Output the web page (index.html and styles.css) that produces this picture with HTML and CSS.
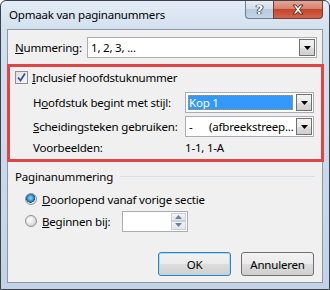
FILE: index.html
```html
<!DOCTYPE html>
<html>
<head>
<meta charset="utf-8">
<link rel="stylesheet" href="styles.css">
</head>
<body>
<div class="window">
  <div class="titlebar">
    <span class="title">Opmaak van paginanummers</span>
    <div class="caption-btns">
      <span class="cbtn help">?</span>
      <span class="cbtn close"><svg width="18" height="11" viewBox="0 0 18 11"><path d="M4 1 L7 1 L9 3.5 L11 1 L14 1 L10.5 5.5 L14 10 L11 10 L9 7.5 L7 10 L4 10 L7.5 5.5 Z" fill="#fff" stroke="#5a2a22" stroke-width="1"/></svg></span>
    </div>
  </div>
  <div class="client">
    <div class="num-row">
      <span class="lbl"><u>N</u>ummering:</span>
      <div class="combo num-combo"><span class="combo-text">1, 2, 3, ...</span><span class="arrow"><svg width="7" height="4" viewBox="0 0 7 4"><path d="M0 0H7L3.5 4Z" fill="#000"/></svg></span></div>
    </div>
    <div class="chapter">
      <div class="check-row">
        <span class="checkbox"><svg width="11" height="11" viewBox="0 0 11 11"><path d="M2 5.5 L4.5 8.5 L9 1.5" fill="none" stroke="#3b4f9a" stroke-width="1.8"/></svg></span>
        <span><u>I</u>nclusief hoofdstuknummer</span>
      </div>
      <div class="chapter-grid">
        <span class="lbl">H<u>o</u>ofdstuk begint met stijl:</span>
        <div class="combo sel-combo"><span class="combo-text"><span class="sel">Kop 1</span></span><span class="arrow"><svg width="7" height="4" viewBox="0 0 7 4"><path d="M0 0H7L3.5 4Z" fill="#000"/></svg></span></div>
        <span class="lbl"><u>S</u>cheidingsteken gebruiken:</span>
        <div class="combo"><span class="combo-text"><span class="dash">-</span>(afbreekstreep...</span><span class="arrow"><svg width="7" height="4" viewBox="0 0 7 4"><path d="M0 0H7L3.5 4Z" fill="#000"/></svg></span></div>
        <span class="lbl">Voorbeelden:</span>
        <span class="example">1-1, 1-A</span>
      </div>
    </div>
    <div class="group-head"><span>Paginanummering</span><span class="rule"></span></div>
    <div class="radio-row first">
      <span class="radio on"></span>
      <span><u>D</u>oorlopend vanaf vorige sectie</span>
    </div>
    <div class="radio-row">
      <span class="radio"></span>
      <span class="begin-lbl"><u>B</u>eginnen bij:</span>
      <div class="spin">
        <span class="spin-field"></span>
        <span class="spin-btns">
          <span class="spin-btn"><svg width="7" height="4" viewBox="0 0 7 4"><path d="M0 4H7L3.5 0Z" fill="#6d7fa6"/></svg></span>
          <span class="spin-btn"><svg width="7" height="4" viewBox="0 0 7 4"><path d="M0 0H7L3.5 4Z" fill="#6d7fa6"/></svg></span>
        </span>
      </div>
    </div>
    <div class="buttons">
      <span class="btn default">OK</span>
      <span class="btn">Annuleren</span>
    </div>
  </div>
</div>
</body>
</html>
```
FILE: styles.css
```css
html, body {
  margin: 0;
  padding: 0;
  background: #fff;
}
body {
  font-family: "Noto Sans", "Open Sans", sans-serif;
  font-size: 11.5px;
  letter-spacing: -0.2px;
  color: #000;
}
.window {
  width: 330px;
  height: 290px;
  box-sizing: border-box;
  border: 1px solid #3c4249;
  border-radius: 6px 6px 0 0;
  background: linear-gradient(180deg, #e4edf7 0px, #d3e0ee 28px, #c3d3e6 100%);
  display: flex;
  flex-direction: column;
  overflow: hidden;
}
.titlebar {
  height: 28px;
  display: flex;
  align-items: flex-start;
  flex-shrink: 0;
}
.title {
  margin: 6px 0 0 8px;
  font-size: 11.5px;
  letter-spacing: -0.2px;
  color: #000;
}
.caption-btns {
  margin-left: auto;
  margin-right: 6px;
  display: flex;
  margin-top: -1px;
}
.cbtn {
  height: 19px;
  box-sizing: border-box;
  display: flex;
  align-items: center;
  justify-content: center;
  border: 1px solid #6f7d8c;
  border-top: none;
}
.help {
  width: 28px;
  border-radius: 0 0 0 4px;
  border-right: none;
  background: linear-gradient(180deg, #e8eff7 0%, #d0dce9 50%, #b7c8db 51%, #c5d5e6 100%);
  font-weight: bold;
  font-size: 13px;
  letter-spacing: 0;
  color: #fff;
  font-family: "DejaVu Sans", sans-serif;
  text-shadow: 0 0 1px #46515e, 0 0 1px #46515e, 1px 0 0 #46515e, -1px 0 0 #46515e;
}
.close {
  width: 50px;
  border-radius: 0 0 4px 0;
  border-color: #7a3a30;
  background: linear-gradient(180deg, #e6a99a 0%, #d7806c 50%, #c5412a 51%, #d2664e 100%);
}
.client {
  flex: 1;
  margin: 0 6px 6px 6px;
  border: 1px solid #8c98a6;
  background: #f0f0f0;
  display: flex;
  flex-direction: column;
}
.lbl {
  white-space: nowrap;
}
.num-row {
  display: flex;
  align-items: center;
  margin: 7px 5px 0 7px;
  height: 21px;
}
.num-row .lbl {
  width: 72px;
}
.combo {
  height: 21px;
  box-sizing: border-box;
  border: 1px solid #abadb3;
  background: #fff;
  display: flex;
  align-items: stretch;
}
.num-combo {
  flex: 1;
}
.combo-text {
  flex: 1;
  display: flex;
  align-items: center;
  padding-left: 3px;
  white-space: nowrap;
  overflow: hidden;
}
.arrow {
  width: 16px;
  margin: 1px;
  box-sizing: border-box;
  border: 1px solid #707070;
  background: linear-gradient(180deg, #f2f2f2 0%, #ebebeb 50%, #dddddd 51%, #cfcfcf 100%);
  display: flex;
  align-items: center;
  justify-content: center;
}
.chapter {
  margin: 6px -2px 0 -1px;
  border: 3px solid #e04545;
  height: 98px;
  box-sizing: border-box;
  display: flex;
  flex-direction: column;
}
.check-row {
  display: flex;
  align-items: center;
  gap: 4px;
  margin: 3px 0 0 5px;
  height: 15px;
}
.checkbox {
  width: 13px;
  height: 13px;
  box-sizing: border-box;
  border: 1px solid #8e8f8f;
  background: linear-gradient(135deg, #dedede 0%, #f8f8f8 100%);
  display: flex;
  align-items: center;
  justify-content: center;
}
.chapter-grid {
  display: grid;
  grid-template-columns: 152px 129px;
  grid-template-rows: 21px 21px 14px;
  row-gap: 3px;
  align-items: center;
  margin: 7px 0 0 23px;
}
.sel-combo .combo-text {
  padding: 2px;
}
.sel {
  flex: 1;
  align-self: stretch;
  background: #3399ff;
  color: #fff;
  outline: 1px dotted #d09040;
  outline-offset: -1px;
  padding-left: 1px;
  display: flex;
  align-items: center;
}
.dash {
  display: inline-block;
  width: 20px;
}
.group-head {
  display: flex;
  align-items: center;
  margin: 6px 7px 0 7px;
  height: 16px;
}
.rule {
  flex: 1;
  height: 1px;
  background: #d5dfe5;
  margin-left: 7px;
}
.radio-row {
  display: flex;
  align-items: center;
  margin-left: 17px;
  height: 20px;
  gap: 5px;
}
.radio-row.first {
  margin-top: 5px;
  margin-bottom: 2px;
}
.radio {
  width: 12px;
  height: 12px;
  box-sizing: border-box;
  border-radius: 50%;
  border: 1px solid #8f9499;
  background: radial-gradient(circle at 40% 40%, #ffffff 0%, #e6e6e6 45%, #bcbcbc 100%);
}
.radio.on {
  background: radial-gradient(circle at 45% 40%, #9fd6f7 0%, #3a98d3 35%, #0c4f7e 55%, #e4e4e4 60%, #d2d2d2 100%);
}
.begin-lbl {
  width: 75px;
}
.spin {
  width: 66px;
  height: 21px;
  box-sizing: border-box;
  border: 1px solid #abadb3;
  background: #fff;
  display: flex;
}
.spin-field {
  flex: 1;
}
.spin-btns {
  width: 15px;
  display: flex;
  flex-direction: column;
  margin: 1px;
}
.spin-btn {
  flex: 1;
  box-sizing: border-box;
  border: 1px solid #c8d0da;
  background: linear-gradient(180deg, #f4f4f4, #e2e5ea);
  display: flex;
  align-items: center;
  justify-content: center;
}
.buttons {
  margin-top: auto;
  margin-bottom: 6px;
  display: flex;
  justify-content: flex-end;
  gap: 10px;
  margin-right: 8px;
}
.btn {
  width: 73px;
  height: 24px;
  box-sizing: border-box;
  border: 1px solid #707070;
  border-radius: 3px;
  background: linear-gradient(180deg, #f2f2f2 0%, #ebebeb 50%, #dddddd 51%, #cfcfcf 100%);
  display: flex;
  align-items: center;
  justify-content: center;
}
.btn.default {
  border-color: #3c7fb1;
  box-shadow: inset 0 0 0 1px #a5dcf5;
}
```
